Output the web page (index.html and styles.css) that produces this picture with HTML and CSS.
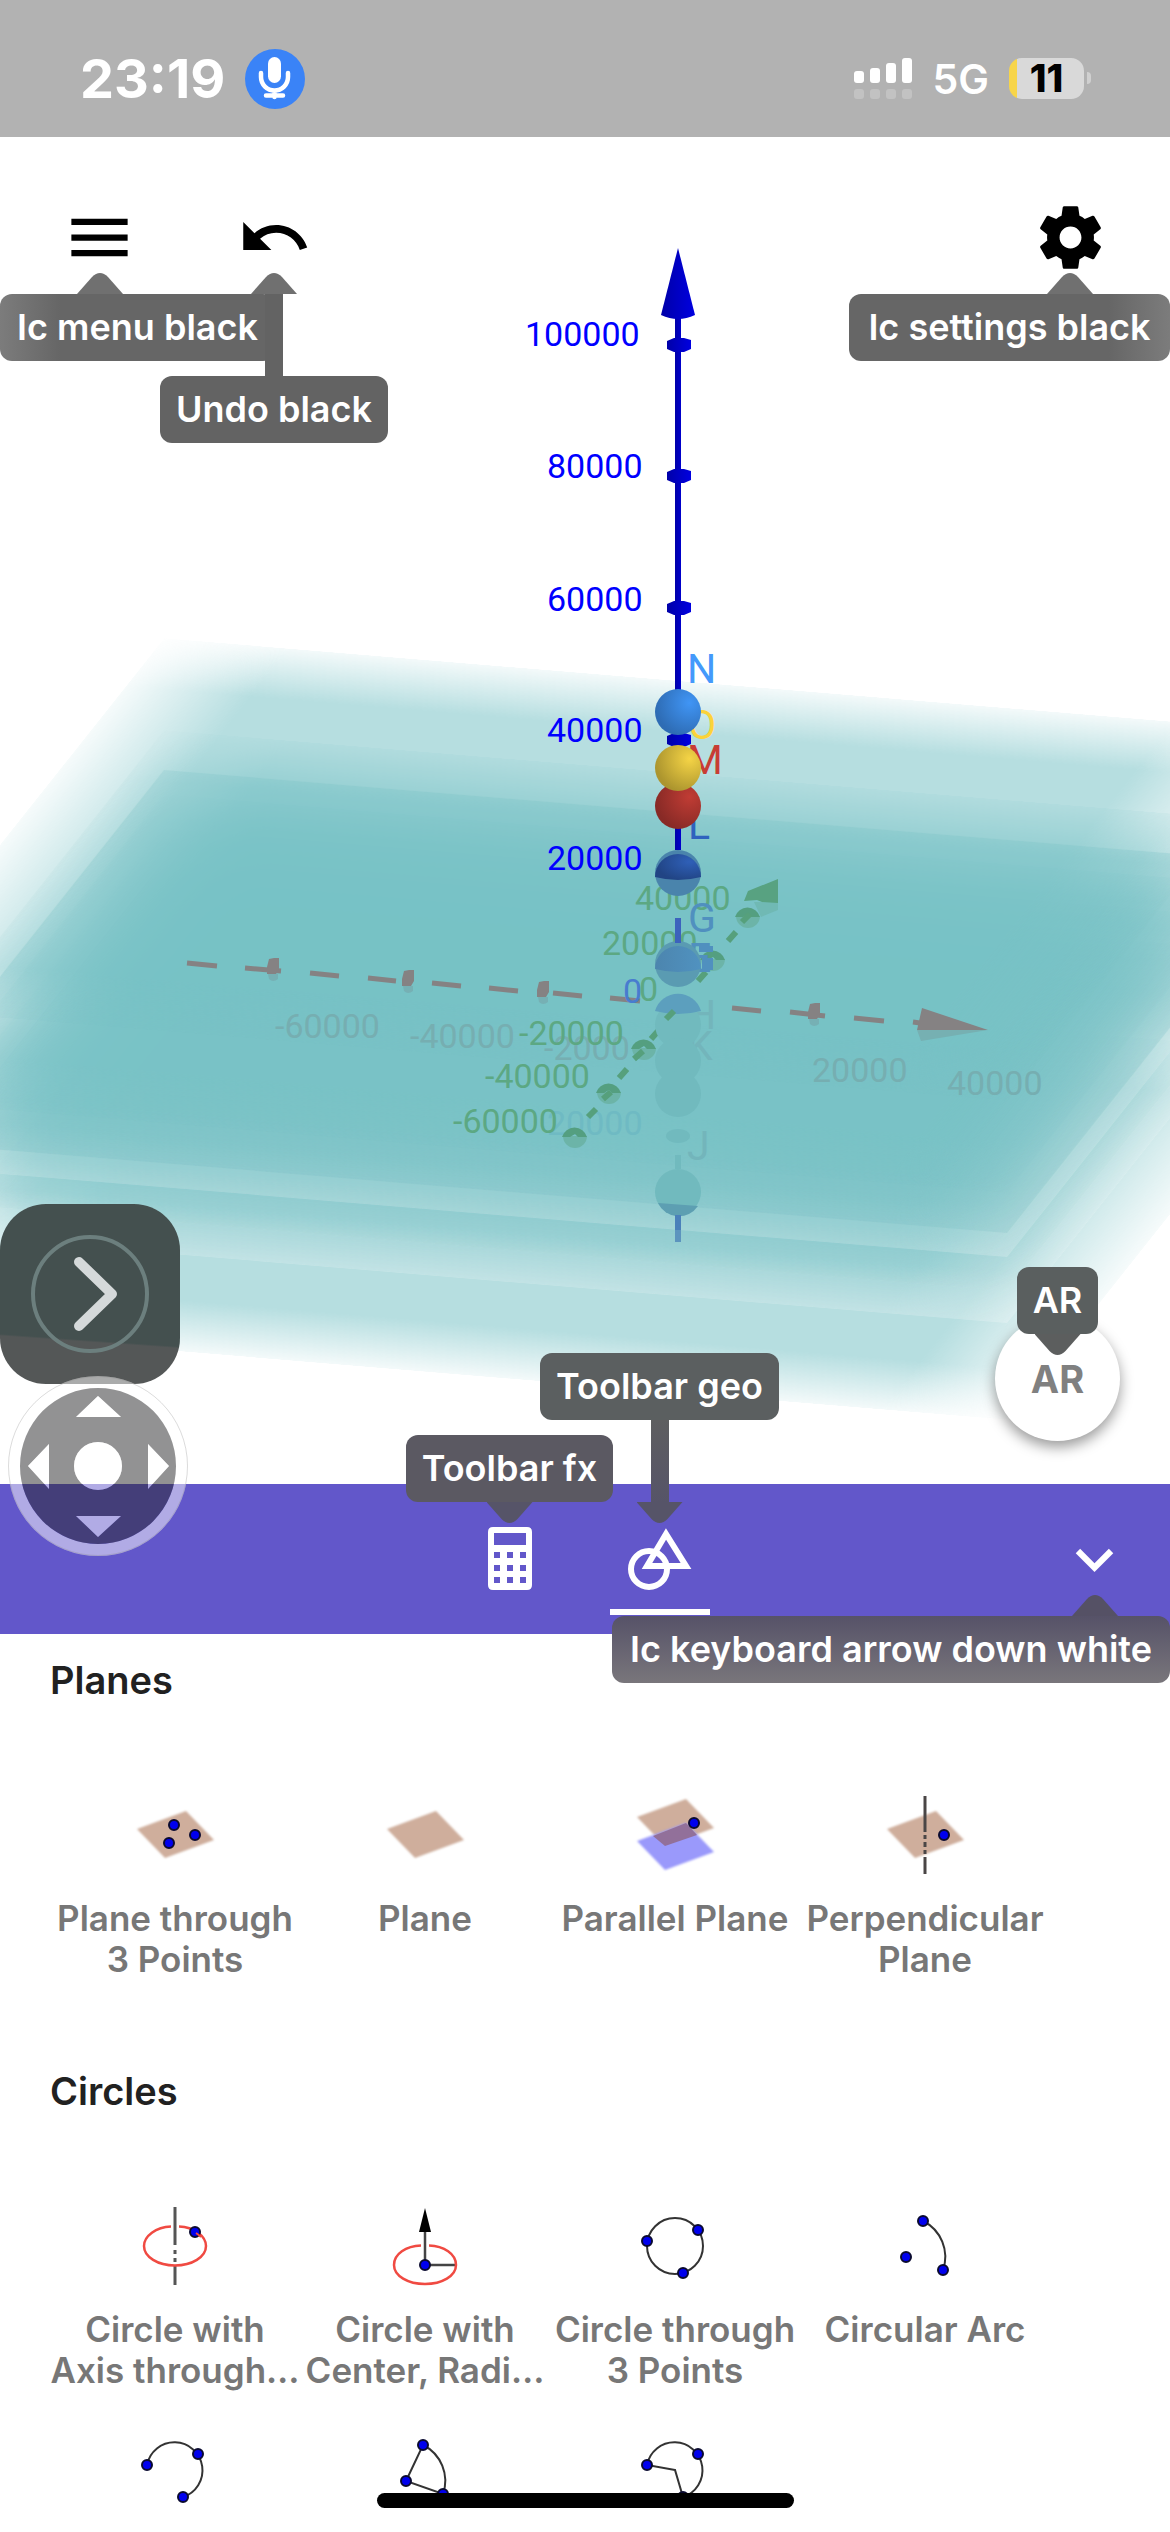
FILE: index.html
```html
<!DOCTYPE html>
<html lang="en">
<head>
<meta charset="utf-8">
<meta name="viewport" content="width=device-width, initial-scale=1">
<title>3D Calculator</title>
<link rel="stylesheet" href="styles.css">
</head>
<body>
<header class="status">
  <div class="status-side">
    <span class="clock">23:19</span>
    <svg class="mic" viewBox="0 0 60 60"><circle cx="30" cy="30" r="30" fill="#3a83f7"/><rect x="23" y="8" width="13" height="26" rx="6.500" fill="#fff"/><path d="M16 24v4a13.500 13.500 0 0 0 27 0v-4M29.500 42v6M21 46.500h17" fill="none" stroke="#fff" stroke-width="4.500" stroke-linecap="round"/></svg>
  </div>
  <div class="status-side">
    <svg class="signal" viewBox="0 0 59 41"><g fill="#fff"><rect y="13" width="10" height="12" rx="3"/><rect x="16" y="10" width="10" height="15" rx="3"/><rect x="32" y="5" width="10" height="20" rx="3"/><rect x="48" width="10" height="25" rx="3"/></g><g fill="#c2c2c2"><rect y="31" width="10" height="10" rx="3"/><rect x="16" y="31" width="10" height="10" rx="3"/><rect x="32" y="31" width="10" height="10" rx="3"/><rect x="48" y="31" width="10" height="10" rx="3"/></g></svg>
    <span class="network">5G</span>
    <span class="battery">11</span>
  </div>
</header>

<main class="view">
  <svg class="scene" viewBox="0 137 1170 1347" preserveAspectRatio="xMidYMid slice">
    <defs>
      <linearGradient id="gh"><stop offset="0" stop-color="#fff" stop-opacity=".12"/><stop offset=".11" stop-color="#fff"/><stop offset=".89" stop-color="#fff"/><stop offset="1" stop-color="#fff" stop-opacity=".12"/></linearGradient>
      <linearGradient id="gv" x2="0" y2="1"><stop offset="0" stop-color="#fff" stop-opacity=".15"/><stop offset=".13" stop-color="#fff"/><stop offset=".87" stop-color="#fff"/><stop offset="1" stop-color="#fff" stop-opacity=".15"/></linearGradient>
      <mask id="mh" maskUnits="userSpaceOnUse" x="0" y="0" width="100" height="100"><rect width="100" height="100" fill="url(#gh)"/></mask>
      <mask id="mv" maskUnits="userSpaceOnUse" x="0" y="0" width="100" height="100"><rect width="100" height="100" fill="url(#gv)"/></mask>
      <g id="plane"><g mask="url(#mh)"><rect width="100" height="100" fill="#76c0c4" fill-opacity=".53" mask="url(#mv)"/></g></g>
      <rect id="veil" width="100" height="100" fill="#fff"/>
      <linearGradient id="ax"><stop offset="0" stop-color="#0000a8"/><stop offset="1" stop-color="#0000e0"/></linearGradient>
      <linearGradient id="axl" gradientUnits="userSpaceOnUse" x1="675" x2="681" y1="0" y2="0"><stop offset="0" stop-color="#0000a8"/><stop offset="1" stop-color="#0000cc"/></linearGradient>
      <radialGradient id="bN" cx=".75" cy=".3" r=".75"><stop offset="0" stop-color="#4095f5"/><stop offset="1" stop-color="#2e6cb4"/></radialGradient>
      <radialGradient id="bO" cx=".75" cy=".3" r=".75"><stop offset="0" stop-color="#f5d446"/><stop offset="1" stop-color="#ac952e"/></radialGradient>
      <radialGradient id="bM" cx=".75" cy=".3" r=".75"><stop offset="0" stop-color="#c03c34"/><stop offset="1" stop-color="#882a26"/></radialGradient>
      <radialGradient id="bL" cx=".75" cy=".3" r=".75"><stop offset="0" stop-color="#2f60b8"/><stop offset="1" stop-color="#214484"/></radialGradient>
      <linearGradient id="bG"><stop offset="0" stop-color="#4c85ae"/><stop offset="1" stop-color="#5092c0"/></linearGradient>
      <g id="tick"><path d="M-12 -4L-5 -7H5L12 -5V4L5 7H-5L-12 4Z" fill="url(#ax)"/></g>
      <g id="dome"><path d="M-12 0a12 12 0 0 0 24 0Z" fill="#6cb4a8"/><path d="M-13 1a13 13 0 0 1 25 0H3l-3-3-5 3Z" fill="#549f80"/></g>
      <g id="xtick"><path d="M1 16h10v5q-5 4-9 0Z" fill="#76b0b4"/><path d="M2 1L7 0H12V11L9 16H0V9Z" fill="#858283"/></g>
    </defs>

    <g>
      <use href="#plane" transform="matrix(11.360 .940 -2.930 3.690 164 957)"/>
      <use href="#veil" opacity=".26" transform="matrix(11.360 .940 -2.930 3.690 164 860)"/>
      <use href="#plane" transform="matrix(11.360 .940 -2.930 3.690 164 860)"/>
      <use href="#veil" opacity=".05" transform="matrix(11.360 .940 -2.930 3.690 164 828)"/>
      <use href="#plane" transform="matrix(11.360 .940 -2.930 3.690 164 828)"/>
      <use href="#veil" opacity=".22" transform="matrix(11.360 .940 -2.930 3.690 164 794)"/>
      <use href="#plane" transform="matrix(11.360 .940 -2.930 3.690 164 794)"/>
      <path d="M164 770L1300 864L1007 1233L-129 1139Z" fill="#76c0c4" opacity=".2"/>
      <use href="#plane" transform="matrix(11.360 .940 -2.930 3.690 164 770)"/>
      <use href="#plane" transform="matrix(11.360 .940 -2.930 3.690 164 730)"/>
      <use href="#plane" transform="matrix(11.360 .940 -2.930 3.690 164 638)"/>
    </g>

    <g class="tick-label faint">
      <text x="275" y="1038">-60000</text><text x="410" y="1048">-40000</text><text x="544" y="1060">-2000</text>
      <text x="812" y="1082">20000</text><text x="947" y="1095">40000</text>
      <text x="547" y="1135" fill="#6fbac3">20000</text>
    </g>
    <g fill="none" stroke="#858283" stroke-width="5"><path d="M187 963l30 3M245 968l36 3M310 973l29 3M368 978l28 3M432 983l29 3M489 988l29 3M553 993l29 3M610 998l30 3M732 1008l29 3M790 1012l35 4M854 1018l30 3M913 1022l7 1"/></g>
    <use href="#xtick" x="267" y="958"/><use href="#xtick" x="402" y="970"/><use href="#xtick" x="537" y="981"/><use href="#xtick" x="808" y="1003"/>
    <path d="M917 1030L921 1041L988 1030Z" fill="#76b0b2"/><path d="M922 1008L988 1030H917Z" fill="#858283"/>

    <g class="tick-label green">
      <text x="519" y="1045">-20000</text><text x="485" y="1088">-40000</text><text x="453" y="1133">-60000</text>
      <text x="635" y="910">40000</text><text x="602" y="955">20000</text><text x="639" y="1001">0</text>
    </g>
    <text class="tick-label" x="623" y="1003" fill="#487ccf">0</text>
    <path d="M754 902H778V910L761 917Z" fill="#70b9b4"/><path d="M744 901L748 891L778 879V903L762 902L757 900Z" fill="#58a281"/>
    <use href="#dome" x="748" y="916"/><use href="#dome" x="713" y="959"/><use href="#dome" x="644" y="1048"/><use href="#dome" x="609" y="1092"/><use href="#dome" x="575" y="1136"/>
    <path d="M742 922l8-8M728 941l8-9M698 981l8-9M666 1020l8-8M651 1039l8-9M634 1059l9-8M619 1078l8-9M603 1099l8-7M588 1117l8-8" fill="none" stroke="#56a07c" stroke-width="6"/>

    <g class="point-label" fill="#73b5bb"><text x="687" y="1029">H</text><text x="687" y="1060">K</text><text x="687" y="1160">J</text></g>
    <g class="point-label" fill="#5090bf"><text x="688" y="932">G</text><text x="688" y="972">E</text></g>
    <path d="M699 946h14v6h-14zM702 958h11v12h-11z" fill="#5090bf"/>
    <g class="point-label"><text x="687" y="683" fill="#4499fb">N</text><text x="688" y="739" fill="#fbd33a">O</text><text x="687" y="774" fill="#c83c34">M</text><text x="688" y="839" fill="#2f62be">L</text></g>

    <g fill="#71babe"><circle cx="678" cy="1025" r="23"/><circle cx="678" cy="1061" r="23"/><circle cx="678" cy="1094" r="23"/><ellipse cx="678" cy="1136" rx="12" ry="7"/><path d="M675 1155h6v14h-6z"/><circle cx="678" cy="1192" r="23"/></g>
    <path d="M658 1203A23 23 0 0 0 698 1206Z" fill="#5d9fb2"/>
    <path d="M675 1215h6v15h-6z" fill="#4a80ba"/><path d="M675 1230h6v12h-6z" fill="#5c94be"/>
    <path d="M655 1011A24 24 0 0 1 701 1011Q678 1017 655 1011Z" fill="#5c9fbe"/>
    <path d="M666 1019l8-8" fill="none" stroke="#56a07c" stroke-width="6"/>
    <circle cx="678" cy="964" r="23" fill="#5a9bb2"/><path d="M655 969A23 23 0 1 1 701 969Q678 975 655 969Z" fill="url(#bG)"/>
    <path d="M675 918h6v25h-6z" fill="#3c62bd"/>
    <path d="M675 310h6v540h-6z" fill="url(#axl)"/>
    <circle cx="678" cy="873" r="23" fill="#4a84ac"/><path d="M655 877A23 23 0 1 1 701 877Q678 883 655 877Z" fill="url(#bL)"/>
    <use href="#tick" x="679" y="345"/><use href="#tick" x="679" y="476"/><use href="#tick" x="679" y="608"/><use href="#tick" x="679" y="740"/>
    <circle cx="678" cy="806" r="23" fill="url(#bM)"/><circle cx="678" cy="768" r="23" fill="url(#bO)"/><circle cx="678" cy="712" r="23" fill="url(#bN)"/>
    <path d="M678 248L695 315Q678 323 661 315Z" fill="url(#ax)"/>
    <g class="tick-label blue"><text x="525" y="346">100000</text><text x="547" y="478">80000</text><text x="547" y="611">60000</text><text x="547" y="742">40000</text><text x="547" y="870">20000</text></g>
  </svg>

  <div class="topbar">
    <button type="button" class="icon-btn"><svg viewBox="0 0 24 24"><path d="M3 18h18v-2H3v2zm0-5h18v-2H3v2zm0-7v2h18V6H3z"/></svg></button>
    <button type="button" class="icon-btn"><svg viewBox="0 0 24 24"><path d="M12.500 8c-2.650 0-5.050.990-6.900 2.600L2 7v9h9l-3.620-3.620c1.390-1.160 3.160-1.880 5.120-1.880 3.540 0 6.550 2.310 7.600 5.500l2.370-.780C21.080 11.030 17.150 8 12.500 8z"/></svg></button>
    <button type="button" class="icon-btn settings"><svg viewBox="0 0 24 24"><path d="M19.430 12.980c.040-.320.070-.640.070-.980s-.030-.660-.070-.980l2.110-1.650c.190-.150.240-.420.120-.640l-2-3.460c-.120-.220-.390-.300-.610-.220l-2.490 1c-.520-.400-1.080-.730-1.690-.980l-.380-2.650C14.460 2.180 14.250 2 14 2h-4c-.250 0-.460.180-.490.420l-.380 2.650c-.610.250-1.170.590-1.690.980l-2.490-1c-.230-.090-.490 0-.610.220l-2 3.460c-.130.220-.070.490.120.640l2.110 1.650c-.040.320-.070.650-.070.980s.030.660.070.980l-2.110 1.650c-.190.150-.240.420-.120.640l2 3.460c.120.220.390.300.610.220l2.490-1c.520.400 1.080.730 1.690.980l.380 2.650c.030.240.240.420.490.420h4c.250 0 .460-.180.490-.420l.380-2.650c.610-.250 1.170-.590 1.690-.980l2.490 1c.230.090.490 0 .610-.220l2-3.460c.120-.220.070-.490-.120-.640l-2.110-1.650zM12 15.500c-1.930 0-3.500-1.570-3.500-3.500s1.570-3.500 3.500-3.500 3.500 1.570 3.500 3.500-1.570 3.500-3.500 3.500z"/></svg></button>
  </div>
  <span class="callout up c-menu">Ic menu black</span>
  <span class="callout up tall c-undo">Undo black</span>
  <span class="callout up c-settings">Ic settings black</span>

  <button type="button" class="ar">AR</button>
  <span class="callout down c-ar">AR</span>

  <button type="button" class="expand"><svg viewBox="0 0 180 180"><circle cx="90" cy="90" r="57" fill="none" stroke="#6c7f7e" stroke-width="4"/><path d="M79 58L112 90L79 122" fill="none" stroke="#d5d9da" stroke-width="10" stroke-linecap="round" stroke-linejoin="round"/></svg></button>
  <svg class="dpad" viewBox="0 0 180 180"><circle cx="90" cy="90" r="84" fill="none" stroke="#fff" stroke-opacity=".5" stroke-width="12"/><circle cx="90" cy="90" r="89.500" fill="none" stroke="#888" stroke-opacity=".3"/><path fill="#262528" fill-opacity=".5" fill-rule="evenodd" d="M90 12a78 78 0 0 1 0 156a78 78 0 0 1 0-156ZM90 66a24 24 0 0 0 0 48a24 24 0 0 0 0-48ZM90 20L68 41H113ZM90 161L68 140H113ZM20 90L41 68V113ZM161 90L140 68V113Z"/><path fill="#fff" fill-opacity=".5" d="M90 66a24 24 0 0 0 0 48a24 24 0 0 0 0-48ZM90 20L68 41H113ZM90 161L68 140H113ZM20 90L41 68V113ZM161 90L140 68V113Z"/></svg>
</main>

<nav class="tabs">
  <div class="tab-group">
    <button type="button" class="tab"><svg viewBox="0 0 44 64"><path fill="#fff" fill-rule="evenodd" d="M5 0H39Q44 0 44 5V58Q44 63 39 63H5Q0 63 0 58V5Q0 0 5 0ZM6 6V18H38V6ZM6 25v6h6v-6ZM19 25v6h6v-6ZM32 25v6h6v-6ZM6 38v6h6v-6ZM19 38v6h6v-6ZM32 38v6h6v-6ZM6 50v6h6v-6ZM19 50v6h6v-6ZM32 50v6h6v-6Z"/></svg><span class="callout down c-fx">Toolbar fx</span></button>
    <button type="button" class="tab active"><svg viewBox="0 0 64 64"><g fill="none" stroke="#fff" stroke-width="6"><circle cx="21" cy="42" r="18"/><path d="M38 7L19 39H58Z"/></g></svg><span class="callout down tall c-geo">Toolbar geo</span></button>
  </div>
  <button type="button" class="icon-btn collapse"><svg viewBox="0 0 24 24"><path fill="#fff" d="M7.410 8.590L12 13.170l4.590-4.580L18 10l-6 6-6-6 1.410-1.410z"/></svg></button>
  <span class="callout up c-collapse">Ic keyboard arrow down white</span>
</nav>

<section class="tools">
  <svg class="sprites" width="0" height="0"><defs>
    <filter id="soft" x="-5%" y="-5%" width="110%" height="110%"><feGaussianBlur stdDeviation=".8"/></filter>
    <path id="rhomb" d="M1 18L50 0L78 29L29 47Z"/>
    <circle id="dot" r="5" fill="#0000ee" stroke="#0a0a30" stroke-width="2"/>
  </defs></svg>
  <h2>Planes</h2>
  <div class="grid">
    <button type="button" class="tool"><svg viewBox="0 0 78 78"><use href="#rhomb" y="15" fill="#cfae9c" filter="url(#soft)"/><use href="#dot" x="38" y="29"/><use href="#dot" x="59" y="39"/><use href="#dot" x="33" y="47"/></svg><span>Plane through<br>3 Points</span></button>
    <button type="button" class="tool"><svg viewBox="0 0 78 78"><use href="#rhomb" y="15" fill="#cfae9c" filter="url(#soft)"/></svg><span>Plane</span></button>
    <button type="button" class="tool"><svg viewBox="0 0 78 78"><use href="#rhomb" y="3" fill="#cfae9c" filter="url(#soft)"/><use href="#rhomb" y="27" fill="#9a99fb" filter="url(#soft)"/><path d="M17 40L50 27L61 39L29 50Z" fill="#92709a"/><use href="#dot" x="58" y="27"/></svg><span>Parallel Plane</span></button>
    <button type="button" class="tool"><svg viewBox="0 0 78 78"><use href="#rhomb" y="15" fill="#cfae9c" filter="url(#soft)"/><path d="M39 0V36M39 39v4M39 46v5M39 54v4M39 61V78" stroke="#4a4646" stroke-width="3"/><use href="#dot" x="58" y="39"/></svg><span>Perpendicular<br>Plane</span></button>
  </div>
  <h2>Circles</h2>
  <div class="grid">
    <button type="button" class="tool"><svg viewBox="0 0 78 78"><path d="M39 0V38M39 43v4M39 51v4M39 59V78" stroke="#555" stroke-width="3"/><path d="M35 19.500C20 20 8 29 8 39C8 50 22 58.500 39 58.500S70 50 70 39C70 29 58 20 43 19.500" fill="none" stroke="#f04a42" stroke-width="2.500"/><use href="#dot" x="59" y="25"/><path d="M60 26Q63 28 65 30" fill="none" stroke="#f04a42" stroke-width="2"/></svg><span>Circle with<br>Axis through…</span></button>
    <button type="button" class="tool"><svg viewBox="0 0 78 78"><path d="M39 24V58H70" fill="none" stroke="#444" stroke-width="2.500"/><path d="M39 1L45 25H33Z"/><path d="M35 38.500C20 39 8 47 8 58C8 69 22 77 39 77S70 69 70 58C70 47 58 39 43 38.500" fill="none" stroke="#f04a42" stroke-width="2.500"/><use href="#dot" x="39" y="58"/></svg><span>Circle with<br>Center, Radi…</span></button>
    <button type="button" class="tool"><svg viewBox="0 0 78 78"><circle cx="39" cy="39" r="28" fill="none" stroke="#333" stroke-width="2"/><use href="#dot" x="62" y="23"/><use href="#dot" x="11" y="34"/><use href="#dot" x="47" y="66"/></svg><span>Circle through<br>3 Points</span></button>
    <button type="button" class="tool"><svg viewBox="0 0 78 78"><path d="M37 14A40 40 0 0 1 57 63" fill="none" stroke="#333" stroke-width="2"/><use href="#dot" x="37" y="14"/><use href="#dot" x="20" y="50"/><use href="#dot" x="57" y="63"/></svg><span>Circular Arc</span></button>
    <button type="button" class="tool"><svg viewBox="0 0 78 78"><path d="M11 34A28 28 0 1 1 47 66" fill="none" stroke="#333" stroke-width="2"/><use href="#dot" x="62" y="23"/><use href="#dot" x="11" y="34"/><use href="#dot" x="47" y="66"/></svg></button>
    <button type="button" class="tool"><svg viewBox="0 0 78 78"><path d="M20 50L37 14A40 40 0 0 1 57 63Z" fill="none" stroke="#333" stroke-width="2"/><use href="#dot" x="37" y="14"/><use href="#dot" x="20" y="50"/><use href="#dot" x="57" y="63"/></svg></button>
    <button type="button" class="tool"><svg viewBox="0 0 78 78"><path d="M39 39L11 34A28 28 0 1 1 47 66Z" fill="none" stroke="#333" stroke-width="2"/><use href="#dot" x="62" y="23"/><use href="#dot" x="11" y="34"/><use href="#dot" x="47" y="66"/></svg></button>
  </div>
</section>
<div class="home-bar"></div>
</body>
</html>
```
FILE: styles.css
```css
* { box-sizing: border-box; }
body {
  margin: 0;
  height: 100vh;
  display: flex;
  flex-direction: column;
  position: relative;
  overflow: hidden;
  background: #fff;
  font-family: Inter, "Liberation Sans", sans-serif;
}
button {
  margin: 0;
  padding: 0;
  border: 0;
  background: none;
  font: inherit;
  color: inherit;
}
svg { display: block; }

/* Status bar */
.status {
  flex: none;
  height: 137px;
  padding: 20px 78px 0 80px;
  display: flex;
  align-items: center;
  justify-content: space-between;
  background: #b2b2b2;
  color: #fff;
}
.status-side { display: flex; align-items: center; gap: 20px; }
.clock { font-size: 54px; font-weight: 700; line-height: 60px; }
.mic { width: 60px; height: 60px; }
.signal { width: 59px; height: 41px; }
.network { font-size: 41px; font-weight: 600; line-height: 44px; }
.battery {
  position: relative;
  width: 75px;
  height: 41px;
  margin-right: 8px;
  border-radius: 13px;
  background: linear-gradient(90deg, #f7d54a 8px, #d9d9d9 8px);
  color: #000;
  font-size: 38px;
  font-weight: 800;
  line-height: 41px;
  text-align: center;
}
.battery::after {
  content: "";
  position: absolute;
  right: -7px;
  top: 14px;
  width: 4px;
  height: 12px;
  border-radius: 0 4px 4px 0;
  background: #d0d0d0;
}

/* 3D view */
.view { position: relative; flex: 1 1 0; min-height: 0; }
.scene { position: absolute; inset: 0; width: 100%; height: 100%; }
.tick-label { font-family: Roboto, sans-serif; font-size: 34px; }
.point-label { font-family: Roboto, sans-serif; font-size: 41px; }
.faint { fill: #76aeb1; }
.green { fill: #5ca883; }
.blue { fill: #0000ff; }

.topbar {
  position: absolute;
  inset: 0 0 auto 0;
  display: flex;
  gap: 100px;
  padding: 63px 62px;
}
.icon-btn { width: 75px; height: 75px; }
.icon-btn svg { width: 100%; height: 100%; }
.settings { margin-left: auto; }

/* Callouts */
.callout {
  --ink: #636363;
  --tip: #707070;
  position: absolute;
  height: 67px;
  border-radius: 12px;
  background: var(--ink);
  color: #fff;
  font-size: 36px;
  font-weight: 600;
  line-height: 67px;
  text-align: center;
  white-space: nowrap;
}
.callout::before {
  content: "";
  position: absolute;
  left: var(--at, 50%);
  width: 46px;
  height: 21px;
  margin-left: -23px;
  background: var(--tip);
}
.up::before { bottom: 100%; clip-path: path("M0 21L15 4Q23 -4 31 4L46 21Z"); }
.down::before { top: 100%; clip-path: path("M0 0L15 17Q23 25 31 17L46 0Z"); }
.tall::after {
  content: "";
  position: absolute;
  left: 50%;
  width: 18px;
  height: 82px;
  margin-left: -9px;
  background: var(--stem, #636363);
}
.tall.up::before { bottom: 149px; }
.tall.up::after { bottom: 100%; }
.tall.down::before { top: 149px; }
.tall.down::after { top: 100%; }
.c-menu {
  left: 0;
  top: 157px;
  width: 275px;
  --at: 100px;
  background: linear-gradient(90deg, #7c7c7c, #666 60px);
}
.c-undo { left: 160px; top: 239px; width: 228px; }
.c-settings {
  right: 0;
  top: 157px;
  width: 321px;
  --at: 221px;
  background: linear-gradient(90deg, #666 260px, #7c7c7c);
}
.c-ar { right: 72px; bottom: 150px; width: 81px; --ink: #5a5f5f; --tip: #5c5e5e; }
.c-fx { left: -54px; top: -49px; width: 207px; --ink: #5b5962; --tip: #565468; }
.c-geo {
  left: -70px;
  top: -131px;
  width: 239px;
  --ink: #5b5f60;
  --tip: #565468;
  --stem: linear-gradient(#5e5e60, #565468);
}
.c-collapse {
  right: 0;
  top: 132px;
  width: 558px;
  --at: 483px;
  --tip: #555165;
  background: linear-gradient(#565268, #79767b);
}

.ar {
  position: absolute;
  right: 50px;
  bottom: 43px;
  width: 125px;
  height: 125px;
  border-radius: 50%;
  background: #fff;
  box-shadow: 0 6px 14px rgba(0, 0, 0, .4);
  color: #808080;
  font-size: 38px;
  font-weight: 700;
}
.expand {
  position: absolute;
  left: 0;
  bottom: 100px;
  width: 180px;
  height: 180px;
  border-radius: 46px;
  background: linear-gradient(184deg, #44504f 74%, #545757 75%);
}
.dpad {
  position: absolute;
  z-index: 2;
  left: 8px;
  bottom: -72px;
  width: 180px;
  height: 180px;
}

/* Tab bar */
.tabs {
  position: relative;
  flex: none;
  height: 150px;
  display: grid;
  grid-template-columns: 1fr auto 1fr;
  align-items: center;
  background: #6257ca;
}
.tab-group { grid-column: 2; display: flex; gap: 50px; }
.tab {
  position: relative;
  width: 100px;
  height: 150px;
  display: grid;
  place-items: center;
}
.tab svg { height: 64px; }
.active { background: linear-gradient(#fff, #fff) 0 125px / 100% 6px no-repeat; }
.collapse { justify-self: end; margin-right: 38px; }

/* Tool panel */
.tools {
  flex: none;
  height: 898px;
  overflow: hidden;
  padding: 22px 120px 0 50px;
}
.sprites { position: absolute; }
h2 {
  margin: 0;
  color: #212121;
  font-size: 38px;
  font-weight: 600;
  line-height: 48px;
}
.grid {
  display: grid;
  grid-template-columns: repeat(4, 1fr);
  grid-auto-rows: 224px;
  padding-top: 92px;
}
.grid + h2 { margin-top: 47px; }
.tool {
  display: flex;
  flex-direction: column;
  align-items: center;
  gap: 24px;
  color: #777;
  font-size: 35px;
  font-weight: 600;
  line-height: 41px;
  white-space: nowrap;
}
.tool svg { width: 78px; height: 78px; overflow: visible; }

.home-bar {
  position: absolute;
  left: 50%;
  bottom: 24px;
  width: 417px;
  height: 15px;
  margin-left: -208px;
  border-radius: 8px;
  background: #000;
}
```
